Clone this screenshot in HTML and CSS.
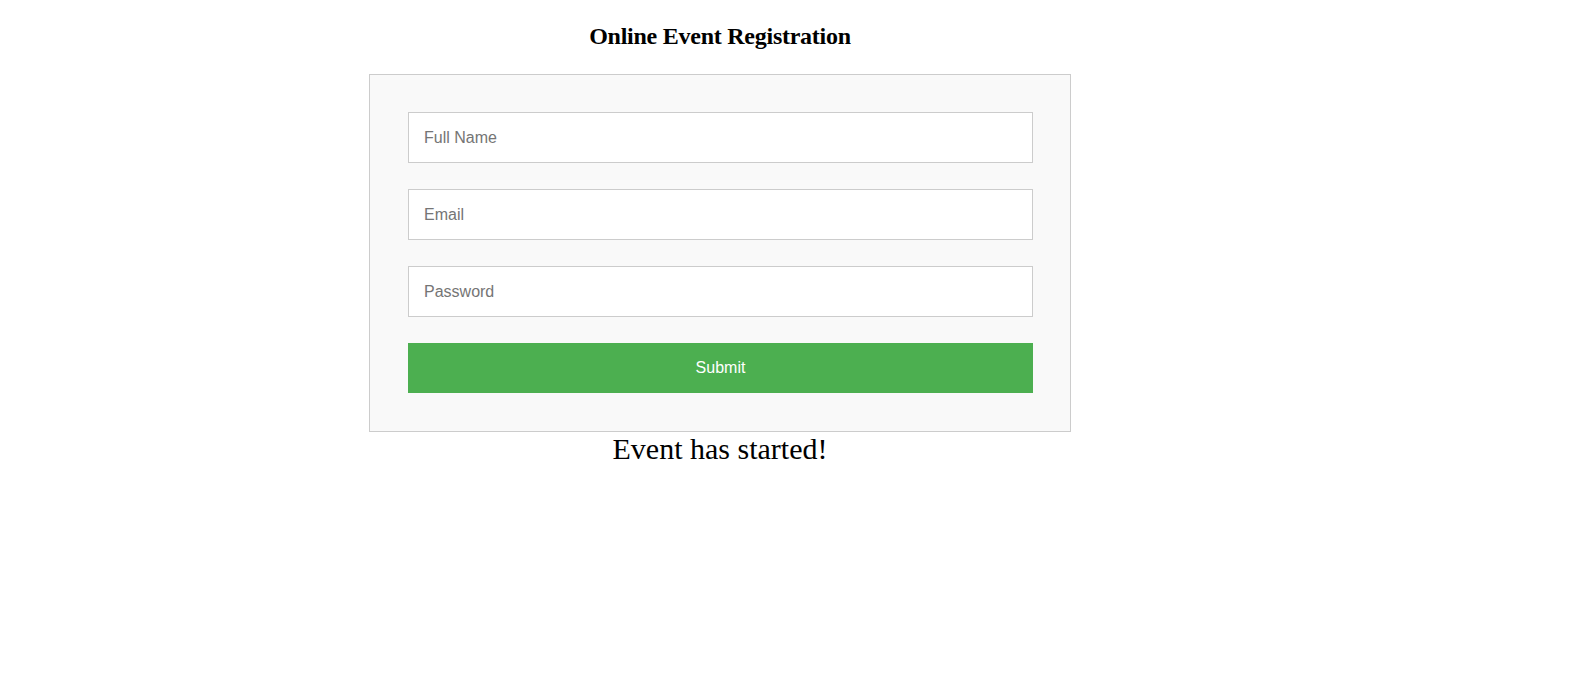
FILE: index.html
```html
<!DOCTYPE html>
<html lang="en">
<head>
<meta charset="utf-8">
<title>Online Event Registration</title>
<link rel="stylesheet" href="styles.css">
</head>
<body>
<main class="page">
  <h2 class="title">Online Event Registration</h2>
  <form class="card">
    <input class="field" type="text" placeholder="Full Name">
    <input class="field" type="email" placeholder="Email">
    <input class="field" type="password" placeholder="Password">
    <button class="submit" type="button">Submit</button>
  </form>
  <p class="message">Event has started!</p>
</main>
</body>
</html>
```
FILE: styles.css
```css
html, body {
  margin: 0;
  padding: 0;
  background: #ffffff;
}

body {
  padding: 8px;
  font-family: "Liberation Serif", "Times New Roman", serif;
}

.page {
  width: 1424px;
  display: flex;
  flex-direction: column;
  align-items: center;
}

.title {
  margin: 15px 0 24px;
  font-size: 24px;
  font-weight: bold;
  line-height: 27px;
  letter-spacing: -0.25px;
  color: #000;
}

.card {
  box-sizing: border-box;
  width: 702px;
  padding: 37px 37px 38px 38px;
  background: #f9f9f9;
  border: 1px solid #cccccc;
  display: flex;
  flex-direction: column;
  gap: 26px;
}

.field {
  box-sizing: border-box;
  width: 100%;
  height: 51px;
  margin: 0;
  padding: 0 15px;
  border: 1px solid #cccccc;
  background: #ffffff;
  font-family: "Liberation Sans", Arial, sans-serif;
  font-size: 16px;
  color: #333;
  outline: none;
}

.field::placeholder {
  color: #757575;
}

.submit {
  box-sizing: border-box;
  width: 100%;
  height: 50px;
  margin: 0;
  border: none;
  background: #4caf50;
  color: #ffffff;
  font-family: "Liberation Sans", Arial, sans-serif;
  font-size: 16px;
  cursor: pointer;
}

.message {
  margin: 0;
  font-size: 30px;
  line-height: 34px;
  color: #000;
}
```
